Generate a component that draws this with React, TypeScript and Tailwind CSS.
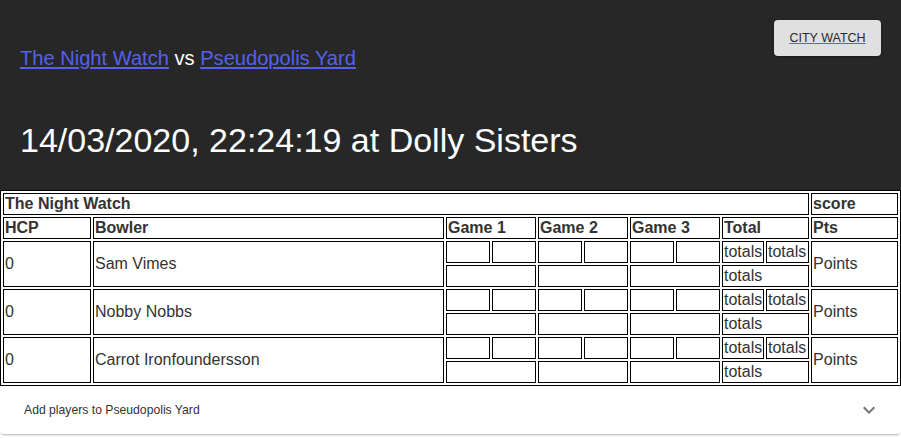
import React from "react";

const players = [
  { hcp: 0, name: "Sam Vimes" },
  { hcp: 0, name: "Nobby Nobbs" },
  { hcp: 0, name: "Carrot Ironfoundersson" },
];

const cell = "border border-black p-px align-middle";

const PlayerRows: React.FC<{ hcp: number; name: string }> = ({ hcp, name }) => (
  <>
    <tr>
      <td rowSpan={2} className={cell}>
        {hcp}
      </td>
      <td rowSpan={2} className={cell}>
        {name}
      </td>
      {[1, 2, 3].map((g) => (
        <React.Fragment key={g}>
          <td className={cell}></td>
          <td className={cell}></td>
        </React.Fragment>
      ))}
      <td className={cell}>totals</td>
      <td className={cell}>totals</td>
      <td rowSpan={2} className={cell}>
        Points
      </td>
    </tr>
    <tr>
      <td colSpan={2} className={cell}></td>
      <td colSpan={2} className={cell}></td>
      <td colSpan={2} className={cell}></td>
      <td colSpan={2} className={cell}>
        totals
      </td>
    </tr>
  </>
);

const App: React.FC = () => {
  return (
    <div className="min-h-screen bg-white font-['Liberation_Sans',Arial,sans-serif]">
      <header className="flex justify-between bg-[#272727] px-5 pb-[29px]">
        <div className="pt-[44px]">
          <p className="text-[20.1px] leading-[28px] text-white">
            <a href="#" className="text-[#5560f0] underline">
              The Night Watch
            </a>{" "}
            vs{" "}
            <a href="#" className="text-[#5560f0] underline">
              Pseudopolis Yard
            </a>
          </p>
          <h1 className="mt-[48px] text-[34px] leading-[41px] text-white">
            14/03/2020, 22:24:19 at Dolly Sisters
          </h1>
        </div>
        <div className="pt-5">
          <button className="flex h-9 w-[107px] items-center justify-center rounded bg-[#e0e0e0] shadow-[0_1px_3px_rgba(0,0,0,0.4)]">
            <a
              href="#"
              className="text-[12.5px] text-[#2a2a2a] underline decoration-[#5560f0]"
            >
              CITY WATCH
            </a>
          </button>
        </div>
      </header>

      <table className="w-[901px] table-fixed border-separate border-spacing-[2px] border border-black text-[16px] leading-[normal] text-[#333]">
        <colgroup>
          <col className="w-[88px]" />
          <col className="w-[351px]" />
          <col className="w-[44px]" />
          <col className="w-[44px]" />
          <col className="w-[44px]" />
          <col className="w-[44px]" />
          <col className="w-[44px]" />
          <col className="w-[44px]" />
          <col className="w-[42px]" />
          <col className="w-[43px]" />
          <col className="w-[87px]" />
        </colgroup>
        <thead>
          <tr>
            <th colSpan={10} className={`${cell} text-left`}>
              The Night Watch
            </th>
            <th className={`${cell} text-left`}>score</th>
          </tr>
          <tr>
            <th className={`${cell} text-left`}>HCP</th>
            <th className={`${cell} text-left`}>Bowler</th>
            <th colSpan={2} className={`${cell} text-left`}>
              Game 1
            </th>
            <th colSpan={2} className={`${cell} text-left`}>
              Game 2
            </th>
            <th colSpan={2} className={`${cell} text-left`}>
              Game 3
            </th>
            <th colSpan={2} className={`${cell} text-left`}>
              Total
            </th>
            <th className={`${cell} text-left`}>Pts</th>
          </tr>
        </thead>
        <tbody>
          {players.map((p) => (
            <PlayerRows key={p.name} hcp={p.hcp} name={p.name} />
          ))}
        </tbody>
      </table>

      <div className="flex h-12 items-center justify-between rounded-b bg-white pl-6 pr-5 shadow-[0_2px_2px_-1px_rgba(0,0,0,0.3)]">
        <span className="text-[12.2px] text-[#333]">Add players to Pseudopolis Yard</span>
        <svg viewBox="0 0 24 24" className="h-6 w-6 fill-[rgba(0,0,0,0.54)]">
          <path d="M16.59 8.59 12 13.17 7.41 8.59 6 10l6 6 6-6z" />
        </svg>
      </div>
    </div>
  );
};

export default App;
